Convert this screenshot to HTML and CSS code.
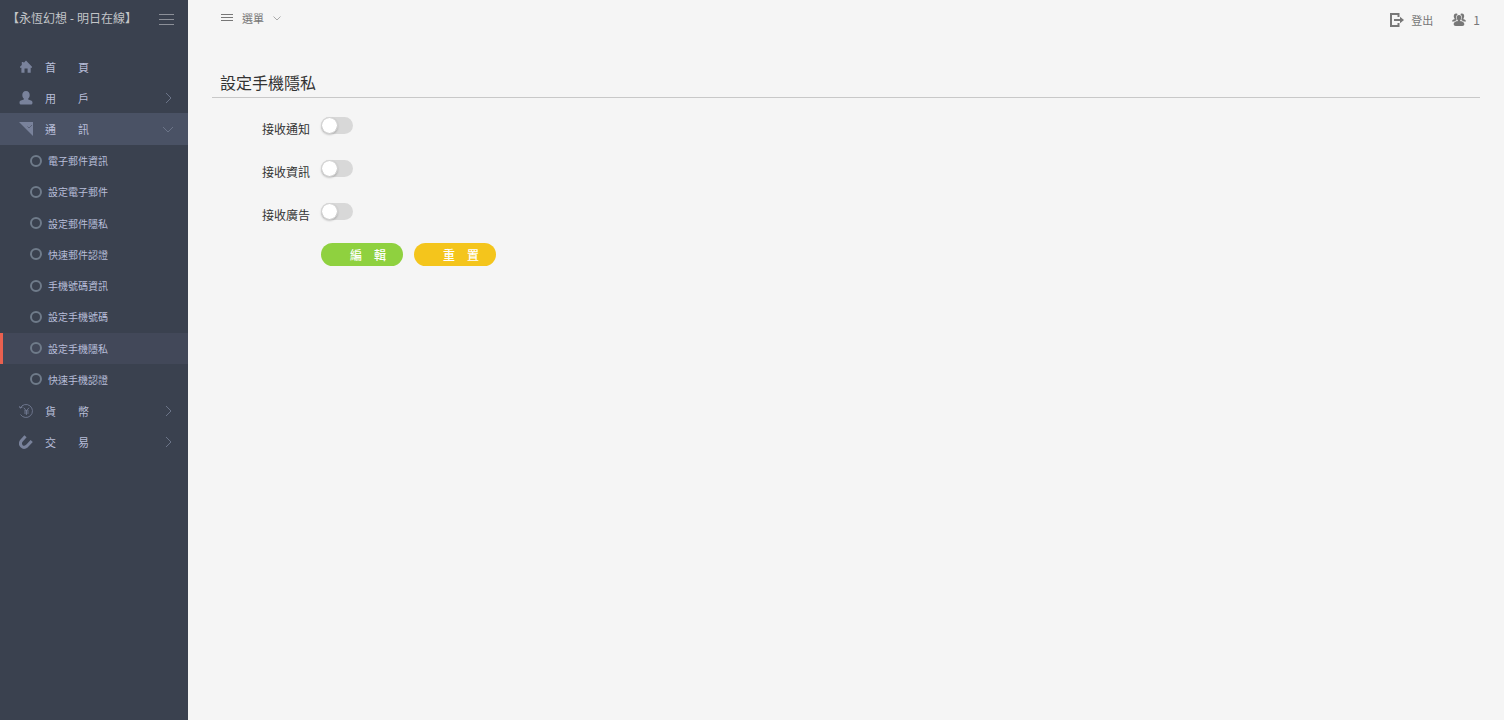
FILE: index.html
```html
<!DOCTYPE html>
<html lang="zh-Hant">
<head>
<meta charset="utf-8">
<meta name="viewport" content="width=device-width, initial-scale=1">
<title>設定手機隱私</title>
<link rel="stylesheet" href="styles.css">
</head>
<body>
<aside class="sidebar">
  <header class="brand">
    <a class="brand-name" href="#">【永恆幻想 - 明日在線】</a>
    <button class="brand-toggle" type="button" aria-label="收合側欄"><svg width="15" height="12" viewBox="0 0 15 12" stroke="currentColor"><path d="M0 1.500h15M0 6.500h15M0 11.500h15"/></svg></button>
  </header>
  <nav>
    <ul class="menu">
      <li><a class="menu-link" href="#"><svg class="icon" viewBox="0 0 14 14" fill="currentColor"><path d="M7 .5 13 6.800v.9h-1.300v5H8.600V8.500H5.500v4.200H2.400v-5H1v-.9L2.800 5V2h1.800v1z"/></svg><span>首&#12288;&#12288;頁</span></a></li>
      <li><a class="menu-link" href="#"><svg class="icon" viewBox="0 0 14 14" fill="currentColor"><path d="M7 0C9.500 0 10.700 1.800 10.700 4c0 1.700-.7 2.800-1.500 3.600v1c1.800.6 4.300.9 4.300 3.100 0 1.300-.7 1.900-2.100 1.900H2.600C1.200 13.600.5 13 .5 11.700c0-2.200 2.500-2.500 4.300-3.100v-1C4 6.800 3.300 5.700 3.300 4 3.300 1.800 4.500 0 7 0z"/></svg><span>用&#12288;&#12288;戶</span><svg class="arrow" viewBox="0 0 12 12"><path d="M4 1l5 5-5 5"/></svg></a></li>
      <li><a class="menu-link open" href="#"><svg class="icon" viewBox="0 0 14 14" fill="currentColor"><path d="M0 0h14v14z"/><path d="M8.500 4.500l1.500 1.500 3-3" fill="none" stroke="#4a5265" stroke-width=".7"/></svg><span>通&#12288;&#12288;訊</span><svg class="arrow" viewBox="0 0 12 12"><path d="M1 4l5 5 5-5"/></svg></a>
        <ul class="submenu">
          <li><a class="sub-link" href="#">電子郵件資訊</a></li>
          <li><a class="sub-link" href="#">設定電子郵件</a></li>
          <li><a class="sub-link" href="#">設定郵件隱私</a></li>
          <li><a class="sub-link" href="#">快速郵件認證</a></li>
          <li><a class="sub-link" href="#">手機號碼資訊</a></li>
          <li><a class="sub-link" href="#">設定手機號碼</a></li>
          <li><a class="sub-link current" href="#" aria-current="page">設定手機隱私</a></li>
          <li><a class="sub-link" href="#">快速手機認證</a></li>
        </ul>
      </li>
      <li><a class="menu-link" href="#"><svg class="icon" viewBox="0 0 14 14" fill="none" stroke="currentColor" stroke-width=".8"><path d="M1.200 4A6.500 6.500 0 1 1 1.500 10.500M0 2l1.200 2.200L3.500 3M4.800 3.700 7.400 7 10 3.700M7.400 7v4M5 7h4.800M5 9h4.800"/></svg><span>貨&#12288;&#12288;幣</span><svg class="arrow" viewBox="0 0 12 12"><path d="M4 1l5 5-5 5"/></svg></a></li>
      <li><a class="menu-link" href="#"><svg class="icon" viewBox="0 0 14 14" fill="none" stroke="currentColor" stroke-width="3"><path d="M6.500 1.200 2.500 5.700C-.5 10 4 14.500 8 11L12.700 6"/></svg><span>交&#12288;&#12288;易</span><svg class="arrow" viewBox="0 0 12 12"><path d="M4 1l5 5-5 5"/></svg></a></li>
    </ul>
  </nav>
</aside>
<div class="page">
  <header class="topbar">
    <button class="top-menu" type="button"><svg width="12" height="9" viewBox="0 0 12 9" stroke="currentColor"><path d="M0 1.500h12M0 4.500h12M0 7.500h12"/></svg><span>選單</span><svg width="8" height="8" viewBox="0 0 8 8" fill="none" stroke="#aaa"><path d="M.5 2.500 4 6l3.500-3.500"/></svg></button>
    <div class="top-actions">
      <a class="top-link" href="#"><svg width="14" height="14" viewBox="0 0 14 14" fill="none" stroke="currentColor" stroke-width="2"><path d="M8.500 4V1H1v12h7.500v-3M4 7h8"/><path d="M10 3.800 14 7l-4 3.200z" fill="currentColor" stroke="none"/></svg><span>登出</span></a>
      <a class="top-link users" href="#"><svg width="14" height="14" viewBox="0 0 14 14" fill="currentColor"><path d="M7 2c1.600 0 2.300 1.200 2.300 2.700 0 1.200-.5 2-1.100 2.600v.8c1.500.5 4.100.8 4.100 3 0 1.400-.7 1.900-2 1.900H3.700c-1.300 0-2-.5-2-1.900 0-2.200 2.600-2.500 4.100-3v-.8C5.200 6.700 4.700 5.900 4.700 4.700 4.700 3.200 5.400 2 7 2z"/><path d="M4 .5c1 0 1.500.4 1.500 1C3.900 2.500 3.700 5 4.800 7L2.300 8.600H0C0 7 1 6.700 2.500 6.200V5.300C1.300 4 1.500.5 4 .5zM10 .5c-1 0-1.500.4-1.500 1 1.600 1 1.800 3.500.7 5.500l2.500 1.600H14c0-1.600-1-1.900-2.500-2.400V5.300C12.700 4 12.500.5 10 .5z"/></svg><span>1</span></a>
    </div>
  </header>
  <main class="content">
    <h1 class="title">設定手機隱私</h1>
    <form class="form">
      <div class="field"><label for="notice">接收通知</label><input class="switch" id="notice" type="checkbox" role="switch"></div>
      <div class="field"><label for="info">接收資訊</label><input class="switch" id="info" type="checkbox" role="switch"></div>
      <div class="field"><label for="ads">接收廣告</label><input class="switch" id="ads" type="checkbox" role="switch"></div>
      <div class="actions">
        <button class="btn edit" type="button">編&#12288;輯</button>
        <button class="btn reset" type="reset">重&#12288;置</button>
      </div>
    </form>
  </main>
</div>
</body>
</html>
```
FILE: styles.css
```css
*,
*::before {
  box-sizing: border-box;
}

body {
  margin: 0;
  min-height: 100vh;
  display: flex;
  background: #f5f5f5;
  color: #333;
  font-family: "Noto Sans CJK TC", "Noto Sans", sans-serif;
  font-size: 12px;
}

a {
  color: inherit;
  text-decoration: none;
}

button {
  border: 0;
  padding: 0;
  background: none;
  color: inherit;
  font: inherit;
  cursor: pointer;
}

ul {
  margin: 0;
  padding: 0;
  list-style: none;
}

svg {
  display: block;
  flex: none;
}

.sidebar {
  flex: 0 0 188px;
  background: #3a414f;
  color: #b8bed9;
}

.brand {
  display: flex;
  align-items: center;
  justify-content: space-between;
  height: 37px;
  margin-bottom: 14px;
  padding: 0 14px 0 7px;
}

.brand-name {
  color: #c3c5c8;
  font-family: "Noto Sans", "Noto Sans CJK TC", sans-serif;
  font-size: 12px;
  line-height: 36px;
  white-space: nowrap;
}

.brand-toggle {
  color: #8b8f98;
}

.menu-link {
  display: flex;
  align-items: center;
  height: 31px;
  padding: 0 14px 0 19px;
  font-size: 11px;
  white-space: nowrap;
}

.menu-link.open {
  height: 32px;
  background: #4a5265;
}

.icon {
  width: 14px;
  height: 14px;
  margin-right: 12px;
  color: #79829b;
}

.arrow {
  width: 12px;
  height: 12px;
  margin-left: auto;
  fill: none;
  stroke: #6b7488;
}

.submenu {
  display: grid;
  grid-auto-rows: 1fr;
  height: 250px;
}

.sub-link {
  display: flex;
  align-items: center;
  gap: 6px;
  height: 100%;
  padding-left: 27px;
  border-left: 3px solid transparent;
  font-size: 10px;
}

.sub-link::before {
  content: "";
  width: 12px;
  height: 12px;
  border: 2px solid #6f7b8a;
  border-radius: 50%;
}

.sub-link.current {
  border-left-color: #e9604f;
  background: #424859;
}

.page {
  flex: 1;
  min-width: 0;
  padding: 0 24px;
}

.topbar {
  display: flex;
  justify-content: space-between;
  height: 70px;
  color: #777;
  font-size: 11px;
}

.top-menu {
  display: flex;
  align-items: center;
  gap: 9px;
  height: 35px;
  padding-left: 9px;
}

.top-actions {
  display: flex;
  gap: 19px;
}

.top-link {
  display: flex;
  align-items: center;
  gap: 7px;
  height: 39px;
}

.users {
  font-size: 12px;
}

.title {
  margin: 0;
  padding: 0 8px 2px;
  border-bottom: 1px solid #c8c8c8;
  font-size: 16px;
  font-weight: 400;
  line-height: 25px;
}

.form {
  display: grid;
  gap: 19px;
  padding-top: 19px;
}

.field {
  display: grid;
  grid-template-columns: 98px auto;
  justify-content: start;
  align-items: start;
  gap: 11px;
  height: 24px;
}

.field label {
  line-height: 24px;
  text-align: right;
}

.switch {
  appearance: none;
  width: 32px;
  height: 17px;
  margin: 0;
  border-radius: 9px;
  background: #d8d8d8;
  cursor: pointer;
}

.switch::before {
  content: "";
  display: block;
  width: 17px;
  height: 17px;
  border: 1px solid #d8d8d8;
  border-radius: 50%;
  background: #fff;
  background-clip: padding-box;
  box-shadow: 0 1px 2px rgba(0, 0, 0, 0.2);
}

.switch:checked {
  background: #8fd13f;
}

.switch:checked::before {
  margin-left: 15px;
}

.actions {
  display: flex;
  gap: 11px;
  margin-top: -3px;
  padding-left: 109px;
}

.btn {
  width: 82px;
  height: 23px;
  padding-left: 12px;
  border-radius: 12px;
  color: #fff;
  font-size: 12px;
  font-weight: 500;
}

.edit {
  background: #8fd13f;
}

.reset {
  background: #f4c51c;
}
```
